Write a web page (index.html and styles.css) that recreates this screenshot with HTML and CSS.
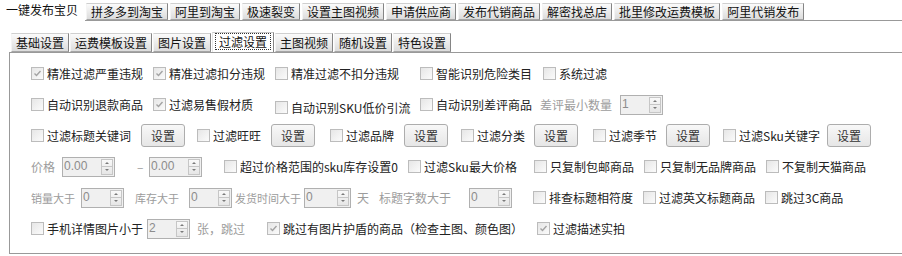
FILE: index.html
```html
<!DOCTYPE html>
<html lang="zh-CN">
<head>
<meta charset="utf-8">
<title>过滤设置</title>
<link rel="stylesheet" href="styles.css">
</head>
<body>
<div class="topbar">
  <div class="ttab active">一键发布宝贝</div>
  <div class="ttabs">
    <div class="ttab">拼多多到淘宝</div>
    <div class="ttab">阿里到淘宝</div>
    <div class="ttab">极速裂变</div>
    <div class="ttab">设置主图视频</div>
    <div class="ttab">申请供应商</div>
    <div class="ttab">发布代销商品</div>
    <div class="ttab">解密找总店</div>
    <div class="ttab">批里修改运费模板</div>
    <div class="ttab">阿里代销发布</div>
  </div>
</div>
<div class="subbar">
  <div class="stab">基础设置</div>
  <div class="stab">运费模板设置</div>
  <div class="stab">图片设置</div>
  <div class="stab active"><span class="focus">过滤设置</span></div>
  <div class="stab">主图视频</div>
  <div class="stab">随机设置</div>
  <div class="stab">特色设置</div>
</div>
<div class="panel">
  <div class="row r1">
    <label class="opt"><span class="cb"><svg width="11" height="11" viewBox="0 0 11 11"><path d="M2.5 5.5 L4.5 7.5 L8.5 3" fill="none" stroke="#a3a3a3" stroke-width="1.4"/></svg></span>精准过滤严重违规</label>
    <label class="opt"><span class="cb"><svg width="11" height="11" viewBox="0 0 11 11"><path d="M2.5 5.5 L4.5 7.5 L8.5 3" fill="none" stroke="#a3a3a3" stroke-width="1.4"/></svg></span>精准过滤扣分违规</label>
    <label class="opt"><span class="cb"></span>精准过滤不扣分违规</label>
    <label class="opt"><span class="cb"></span>智能识别危险类目</label>
    <label class="opt"><span class="cb"></span>系统过滤</label>
  </div>
  <div class="row r2">
    <label class="opt"><span class="cb"></span>自动识别退款商品</label>
    <label class="opt"><span class="cb"><svg width="11" height="11" viewBox="0 0 11 11"><path d="M2.5 5.5 L4.5 7.5 L8.5 3" fill="none" stroke="#a3a3a3" stroke-width="1.4"/></svg></span>过滤易售假材质</label>
    <label class="opt low"><span class="cb"></span>自动识别SKU低价引流</label>
    <label class="opt"><span class="cb"></span>自动识别差评商品</label>
    <span class="grp"><span class="gray">差评最小数量</span><span class="spin"><span class="val">1</span><span class="arr"><i class="up"></i><i class="dn"></i></span></span></span>
  </div>
  <div class="row r3">
    <label class="opt"><span class="cb"></span>过滤标题关键词</label>
    <span class="btn">设置</span>
    <label class="opt"><span class="cb"></span>过滤旺旺</label>
    <span class="btn">设置</span>
    <label class="opt"><span class="cb"></span>过滤品牌</label>
    <span class="btn">设置</span>
    <label class="opt"><span class="cb"></span>过滤分类</label>
    <span class="btn">设置</span>
    <label class="opt"><span class="cb"></span>过滤季节</label>
    <span class="btn">设置</span>
    <label class="opt"><span class="cb"></span>过滤Sku关键字</label>
    <span class="btn">设置</span>
  </div>
  <div class="row r4">
    <span class="gray">价格</span>
    <span class="spin wide"><span class="val">0.00</span><span class="arr"><i class="up"></i><i class="dn"></i></span></span>
    <span class="gray">–</span>
    <span class="spin wide"><span class="val">0.00</span><span class="arr"><i class="up"></i><i class="dn"></i></span></span>
    <label class="opt"><span class="cb"></span>超过价格范围的sku库存设置0</label>
    <label class="opt"><span class="cb"></span>过滤Sku最大价格</label>
    <label class="opt"><span class="cb"></span>只复制包邮商品</label>
    <label class="opt"><span class="cb"></span>只复制无品牌商品</label>
    <label class="opt"><span class="cb"></span>不复制天猫商品</label>
  </div>
  <div class="row r5">
    <span class="gray sm">销量大于</span>
    <span class="spin"><span class="val">0</span><span class="arr"><i class="up"></i><i class="dn"></i></span></span>
    <span class="gray sm">库存大于</span>
    <span class="spin"><span class="val">0</span><span class="arr"><i class="up"></i><i class="dn"></i></span></span>
    <span class="gray sm">发货时间大于</span>
    <span class="spin mid"><span class="val">0</span><span class="arr"><i class="up"></i><i class="dn"></i></span></span>
    <span class="gray">天</span>
    <span class="gray">标题字数大于</span>
    <span class="spin"><span class="val">0</span><span class="arr"><i class="up"></i><i class="dn"></i></span></span>
    <label class="opt"><span class="cb"></span>排查标题相符度</label>
    <label class="opt"><span class="cb"></span>过滤英文标题商品</label>
    <label class="opt"><span class="cb"></span>跳过3C商品</label>
  </div>
  <div class="row r6">
    <label class="opt"><span class="cb"></span>手机详情图片小于</label>
    <span class="spin"><span class="val">2</span><span class="arr"><i class="up"></i><i class="dn"></i></span></span>
    <span class="gray">张，跳过</span>
    <label class="opt"><span class="cb"><svg width="11" height="11" viewBox="0 0 11 11"><path d="M2.5 5.5 L4.5 7.5 L8.5 3" fill="none" stroke="#a3a3a3" stroke-width="1.4"/></svg></span>跳过有图片护盾的商品（检查主图、颜色图）</label>
    <label class="opt"><span class="cb"><svg width="11" height="11" viewBox="0 0 11 11"><path d="M2.5 5.5 L4.5 7.5 L8.5 3" fill="none" stroke="#a3a3a3" stroke-width="1.4"/></svg></span>过滤描述实拍</label>
  </div>
</div>
</body>
</html>
```

FILE: styles.css
```css
* { box-sizing: border-box; }
html, body { margin: 0; padding: 0; background: #fff; }
body {
  font-family: "Noto Sans CJK SC", "Noto Sans", sans-serif;
  font-size: 12px;
  color: #222;
  width: 902px;
  height: 256px;
  overflow: hidden;
}

/* top tab strip */
.topbar { display: flex; height: 21px; }
.ttabs {
  flex: 1;
  display: flex;
  align-items: flex-end;
  border-bottom: 1px solid #999;
  padding-left: 1px;
}
.ttab {
  height: 17px;
  padding: 0 4px;
  margin-right: 2px;
  border: 1px solid;
  border-color: #cfcfcf #858585 #a5a5a5 #f4f4f4;
  background: linear-gradient(#fbfbfb, #dcdcdc);
  line-height: 15px;
  color: #111;
  white-space: nowrap;
}
.ttab.active {
  width: 85px;
  height: 21px;
  margin: 0;
  padding: 0 0 0 6px;
  border: none;
  background: #fff;
  line-height: 20px;
}

/* sub tab strip */
.subbar {
  display: flex;
  align-items: flex-end;
  height: 21px;
  margin: 11px 0 0 9px;
  padding-left: 2px;
  border-bottom: 1px solid #999;
}
.stab {
  height: 19px;
  padding: 0 4px;
  margin-right: 1px;
  border: 1px solid;
  border-color: #cfcfcf #858585 #a5a5a5 #f4f4f4;
  background: linear-gradient(#fbfbfb, #dcdcdc);
  line-height: 17px;
  color: #111;
  white-space: nowrap;
}
.stab.active {
  height: 20px;
  padding: 0 2px;
  border-color: #c8c8c8 #858585 transparent #e6e6e6;
  border-bottom: none;
  background: #fff;
}
.focus {
  display: block;
  padding: 0 3px;
  border: 1px dotted #333;
  line-height: 15px;
}

/* panel */
.panel {
  margin-left: 9px;
  height: 201px;
  padding: 5px 0 9px 21px;
  border-left: 1px solid #999;
  border-bottom: 1px solid #999;
}
.row {
  display: grid;
  height: 31px;
  align-items: center;
  justify-items: start;
  white-space: nowrap;
}
.r1 { grid-template-columns: 122px 122px 145px 123px auto; }
.r2 { grid-template-columns: 122px 122px 145px 120px auto; }
.r3 { grid-template-columns: 110px 56px 74px 59px 74px 57px 73px 59px 73px 57px 104px auto; }
.r4 { grid-template-columns: 31px 75px 12px 75px 184px 126px 110px 122px auto; }
.r5 { grid-template-columns: 50px 54px 54px 46px 69px 53px 22px 90px 64px 110px 122px auto; }
.r6 { grid-template-columns: 116px 50px 70px 270px auto; }

.opt { display: flex; align-items: center; gap: 3px; line-height: 16px; }
.opt.low { margin-top: 6px; }
.cb {
  flex: none;
  width: 13px;
  height: 13px;
  border: 1px solid #bcbcbc;
  background: linear-gradient(135deg, #e6e6e6, #fbfbfb);
}
.cb svg { display: block; }
.gray { color: #9c9c9c; }
.gray.sm { font-size: 11px; }
.grp { display: flex; align-items: center; gap: 8px; }

.btn {
  width: 44px;
  height: 23px;
  display: flex;
  align-items: center;
  justify-content: center;
  border: 1px solid #adadad;
  border-radius: 3px;
  background: linear-gradient(#f8f8f8, #e6e6e6);
  color: #333;
}

.spin {
  display: flex;
  width: 43px;
  height: 20px;
  border: 1px solid #b0b0b0;
  background: #f0f0f0;
}
.spin.wide { width: 53px; }
.spin.mid { width: 47px; }
.spin .val {
  flex: 1;
  padding-left: 1px;
  font-family: "Liberation Sans", Arial, sans-serif;
  font-size: 12px;
  line-height: 16px;
  color: #8c8c8c;
}
.arr {
  width: 12px;
  margin: 1px 1px 1px 0;
  display: flex;
  flex-direction: column;
  border: 1px solid #c6c6c6;
  background: linear-gradient(#f9f9f9, #e6e6e6);
}
.arr i { flex: 1; display: flex; align-items: center; justify-content: center; }
.arr i + i { border-top: 1px solid #c6c6c6; }
.arr i::before {
  content: "";
  border-left: 2px solid transparent;
  border-right: 2px solid transparent;
}
.arr .up::before { border-bottom: 2px solid #7a7a7a; }
.arr .dn::before { border-top: 2px solid #7a7a7a; }
```
